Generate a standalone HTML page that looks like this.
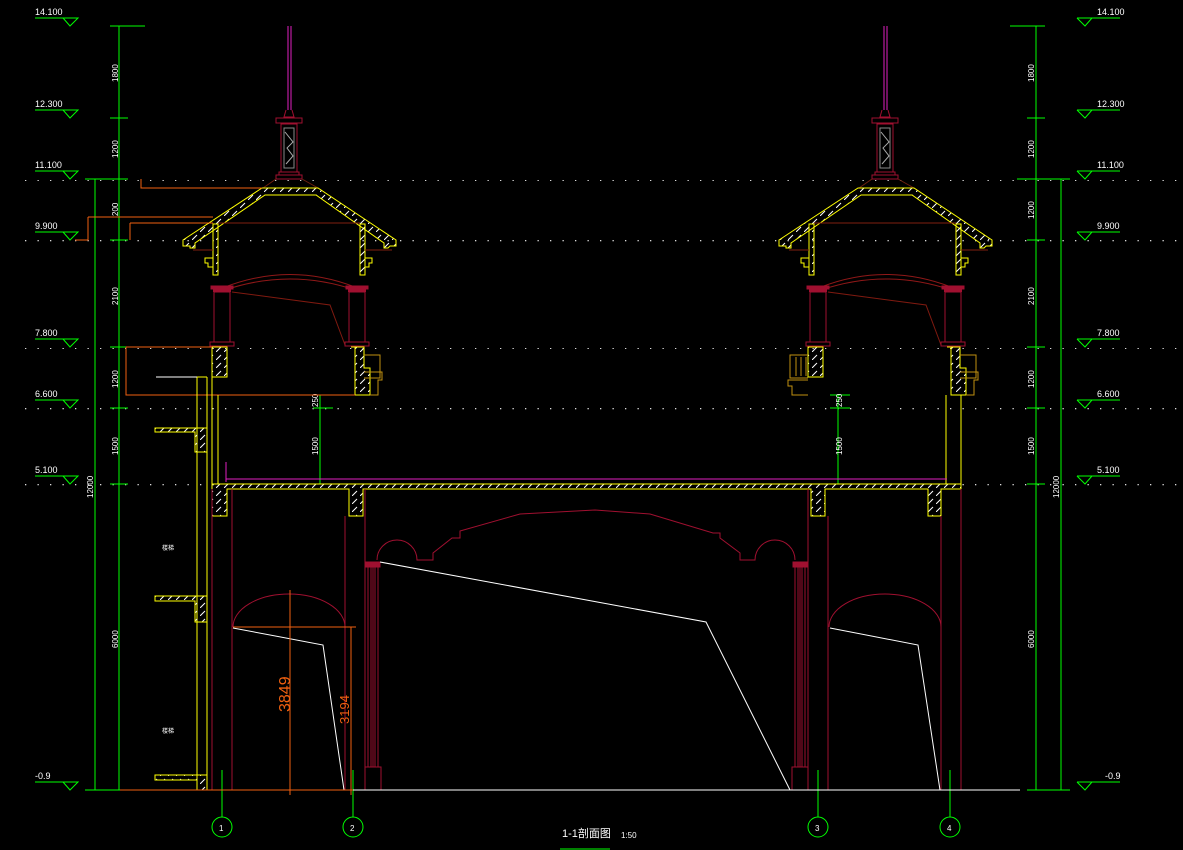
<!DOCTYPE html>
<html><head><meta charset="utf-8"><style>
html,body{margin:0;padding:0;background:#000;width:1183px;height:850px;overflow:hidden}
svg{display:block}
text{font-family:"Liberation Sans","Noto Sans CJK SC",sans-serif;fill:#fff}
</style></head><body>
<svg width="1183" height="850" viewBox="0 0 1183 850" xmlns="http://www.w3.org/2000/svg">
<defs>
<pattern id="h" width="8" height="8" patternUnits="userSpaceOnUse">
<line x1="0" y1="8" x2="5" y2="3" stroke="#fff" stroke-width="1"/>
</pattern>
<pattern id="dots" width="12.5" height="4" patternUnits="userSpaceOnUse">
<rect x="0" y="0" width="1.3" height="1.3" fill="#ddd"/>
</pattern>
<g id="tower" fill="none">
<path d="M288 26 V110 M291 26 V110" stroke="#e020c0"/>
<path d="M286 110 L284 117 H294 L292 110" stroke="#a01030"/>
<rect x="276" y="118" width="26" height="5" stroke="#a01030"/>
<rect x="281" y="124" width="16" height="48" stroke="#a01030"/>
<rect x="284" y="128" width="10" height="40" stroke="#888"/>
<path d="M285 132 l8 10 l-6 6 l6 8 l-7 8" stroke="#aaa"/>
<rect x="279" y="172" width="20" height="3" stroke="#a01030"/>
<rect x="276" y="175" width="26" height="4" stroke="#a01030"/>
<path d="M276 179 L263 188 M302 179 L318 188" stroke="#702010"/>
<path d="M183 240 L262 188 H318 L396 240 V246 H390 L388 248 H384 V243 L316 195 H265 L195 243 V248 H190 V246 H183 Z" fill="url(#h)" stroke="#ff0"/>
<path d="M213 224 H218 V275 H213 Z M360 224 H365 V275 H360 Z" fill="url(#h)" stroke="#ff0"/>
<path d="M213 258 H205 V263 H208 V267 H213 M365 258 H372 V263 H369 V267 H365" stroke="#ff0"/>
<path d="M218 223 H360 M193 250 H213 M365 250 H392" stroke="#802010"/>
<path d="M225 290 Q290 268 355 290 M225 287 Q290 262 355 287" stroke="#901818"/>
<path d="M232 292 L330 305 L345 345" stroke="#801a10"/>
<rect x="211" y="286" width="22" height="3" fill="#a01030" stroke="#a01030"/>
<rect x="213" y="289" width="18" height="3" fill="#a01030"/>
<rect x="214" y="292" width="16" height="50" stroke="#a01030"/>
<rect x="210" y="342" width="24" height="4" stroke="#a01030"/>
<rect x="346" y="286" width="22" height="3" fill="#a01030" stroke="#a01030"/>
<rect x="348" y="289" width="18" height="3" fill="#a01030"/>
<rect x="349" y="292" width="16" height="50" stroke="#a01030"/>
<rect x="345" y="342" width="24" height="4" stroke="#a01030"/>
<path d="M212 347 H227 V377 H212 Z" fill="url(#h)" stroke="#ff0"/>
<path d="M351 347 H364 V368 H370 V395 H355 V347" fill="url(#h)" stroke="#ff0"/>
<path d="M364 355 H380 V378 H364 M364 372 H382 V380 H378 V395 H370" stroke="#c09010"/>
</g>
</defs>

<g fill="url(#dots)">
<rect x="20" y="26" width="1160" height="2"/>
<rect x="20" y="118" width="1160" height="2"/>
<rect x="20" y="179" width="1160" height="2"/>
<rect x="20" y="240" width="1160" height="2"/>
<rect x="20" y="347" width="1160" height="2"/>
<rect x="20" y="408" width="1160" height="2"/>
<rect x="20" y="484" width="200" height="2"/>
<rect x="960" y="484" width="220" height="2"/>
<rect x="20" y="790" width="80" height="2"/>
<rect x="1060" y="790" width="120" height="2"/>
</g>

<g stroke="#0f0" fill="none">
<path d="M35 18 H78 L70 26 L63 18 M35 110 H78 L70 118 L63 110 M35 171 H78 L70 179 L63 171 M35 232 H78 L70 240 L63 232 M35 339 H78 L70 347 L63 339 M35 400 H78 L70 408 L63 400 M35 476 H78 L70 484 L63 476 M35 782 H78 L70 790 L63 782"/>
<path d="M1077 18 H1120 M1077 18 L1085 26 L1092 18 M1077 110 H1120 M1077 110 L1085 118 L1092 110 M1077 171 H1120 M1077 171 L1085 179 L1092 171 M1077 232 H1120 M1077 232 L1085 240 L1092 232 M1077 339 H1120 M1077 339 L1085 347 L1092 339 M1077 400 H1120 M1077 400 L1085 408 L1092 400 M1077 476 H1120 M1077 476 L1085 484 L1092 476 M1077 782 H1120 M1077 782 L1085 790 L1092 782"/>
<path d="M119 26 V790 M95 179 V790 M110 26 H145 M110 118 H128 M110 179 H128 M85 179 H128 M110 240 H128 M110 347 H128 M110 408 H128 M110 484 H128 M85 790 H128"/>
<path d="M1036 26 V790 M1061 179 V790 M1010 26 H1045 M1027 118 H1045 M1017 179 H1070 M1027 240 H1045 M1027 347 H1045 M1027 408 H1045 M1027 484 H1045 M1027 790 H1070"/>
<path d="M320 395 V484 M312 395 H333 M313 408 H333 M838 395 V484 M830 395 H850 M830 408 H850"/>
<path d="M222 770 V817 M353 770 V817 M818 770 V817 M950 770 V817"/>
<circle cx="222" cy="827" r="10"/><circle cx="353" cy="827" r="10"/><circle cx="818" cy="827" r="10"/><circle cx="950" cy="827" r="10"/>
<path d="M560 849 H610"/>
</g>
<g font-size="9">
<text x="35" y="15">14.100</text><text x="35" y="107">12.300</text><text x="35" y="168">11.100</text><text x="35" y="229">9.900</text><text x="35" y="336">7.800</text><text x="35" y="397">6.600</text><text x="35" y="473">5.100</text><text x="35" y="779">-0.9</text>
<text x="1097" y="15">14.100</text><text x="1097" y="107">12.300</text><text x="1097" y="168">11.100</text><text x="1097" y="229">9.900</text><text x="1097" y="336">7.800</text><text x="1097" y="397">6.600</text><text x="1097" y="473">5.100</text><text x="1105" y="779">-0.9</text>
</g>
<g font-size="8">
<text transform="translate(118,82) rotate(-90)">1800</text>
<text transform="translate(118,158) rotate(-90)">1200</text>
<text transform="translate(118,216) rotate(-90)">200</text>
<text transform="translate(118,305) rotate(-90)">2100</text>
<text transform="translate(118,388) rotate(-90)">1200</text>
<text transform="translate(118,455) rotate(-90)">1500</text>
<text transform="translate(118,648) rotate(-90)">6000</text>
<text transform="translate(93,498) rotate(-90)">12000</text>
<text transform="translate(1034,82) rotate(-90)">1800</text>
<text transform="translate(1034,158) rotate(-90)">1200</text>
<text transform="translate(1034,219) rotate(-90)">1200</text>
<text transform="translate(1034,305) rotate(-90)">2100</text>
<text transform="translate(1034,388) rotate(-90)">1200</text>
<text transform="translate(1034,455) rotate(-90)">1500</text>
<text transform="translate(1034,648) rotate(-90)">6000</text>
<text transform="translate(1059,498) rotate(-90)">12000</text>
<text transform="translate(318,407) rotate(-90)">250</text>
<text transform="translate(318,455) rotate(-90)">1500</text>
<text transform="translate(842,407) rotate(-90)">250</text>
<text transform="translate(842,455) rotate(-90)">1500</text>
<text x="219" y="831" font-size="8">1</text><text x="350" y="831" font-size="8">2</text><text x="815" y="831" font-size="8">3</text><text x="947" y="831" font-size="8">4</text>
<text x="562" y="837" font-size="11">1-1剖面图</text><text x="621" y="838" font-size="8">1:50</text>
<text x="162" y="550" font-size="6">楼梯</text><text x="162" y="733" font-size="6">楼梯</text>
</g>

<use href="#tower"/>
<use href="#tower" transform="translate(596,0)"/>
<path d="M808 355 H790 V378 H808 M808 380 H788 V386 H792 V395 H808" stroke="#c09010" fill="none"/>
<path d="M806 357 V376 M801 357 V376 M796 357 V376" stroke="#c09010"/>

<g stroke="#f06010" fill="none">
<path d="M141 179 V188 H262 M88 217 H213 M88 217 V240 H75 M130 223 V240 M130 223 H213 M126 347 V395 H355 M126 347 H212"/>
</g>

<g stroke="#ff0" fill="none">
<path d="M197 377 V790 M207 377 V790 M212 377 V484 M218 395 V484 M156 377 H207"/>
<path d="M155 428 H207 V452 H195 V432 H155 Z" fill="url(#h)"/>
<path d="M155 596 H207 V622 H195 V601 H155 Z" fill="url(#h)"/>
<path d="M155 775 H207 V790 H197 V780 H155 Z" fill="url(#h)"/>
<path d="M946 395 V484 M961 395 V484"/>
</g>
<path d="M156 377 H197" stroke="#fff"/>

<path d="M212 484 H961 V489 H941 V516 H928 V489 H825 V516 H811 V489 H363 V516 H349 V489 H227 V516 H212 Z" fill="url(#h)" stroke="#ff0"/>
<path d="M226 479 H947 M226 482 V462" stroke="#e020c0"/>

<g stroke="#a01030" fill="none">
<path d="M212 489 V790 M232 489 V790 M345 516 V790 M365 489 V790 M808 489 V790 M828 516 V790 M941 516 V790 M961 489 V790"/>
<rect x="366" y="562" width="14" height="5" fill="#a01030"/>
<rect x="368" y="567" width="10" height="200"/><path d="M371 567 V767 M373 567 V767 M375 567 V767"/>
<rect x="365" y="767" width="16" height="23"/>
<rect x="793" y="562" width="14" height="5" fill="#a01030"/>
<rect x="795" y="567" width="10" height="200"/><path d="M798 567 V767 M800 567 V767 M802 567 V767"/>
<rect x="792" y="767" width="16" height="23"/>
<path d="M377 560 A20 20 0 0 1 417 560 H433 V553 L452 538 H460 V531 L520 514 L595 510 L650 514 L713 533 H720 V538 L740 553 V560 H755 A20 20 0 0 1 795 560"/>
<path d="M233 627 A56 33 0 0 1 345 627 M829 627 A56 33 0 0 1 941 627"/>
</g>

<g stroke="#fff" fill="none">
<path d="M380 562 L706 622 L790 790 M233 628 L323 645 L344 790 M830 628 L918 645 L940 790 M353 790 H1020"/>
</g>

<g stroke="#f06010" fill="none">
<path d="M120 790 H353 M290 590 V795 M233 627 H356 M351 627 V795"/>
</g>
<text transform="translate(290,712) rotate(-90)" font-size="16" style="fill:#f06010">3849</text>
<text transform="translate(349,724) rotate(-90)" font-size="13" style="fill:#f06010">3194</text>
</svg>
</body></html>
